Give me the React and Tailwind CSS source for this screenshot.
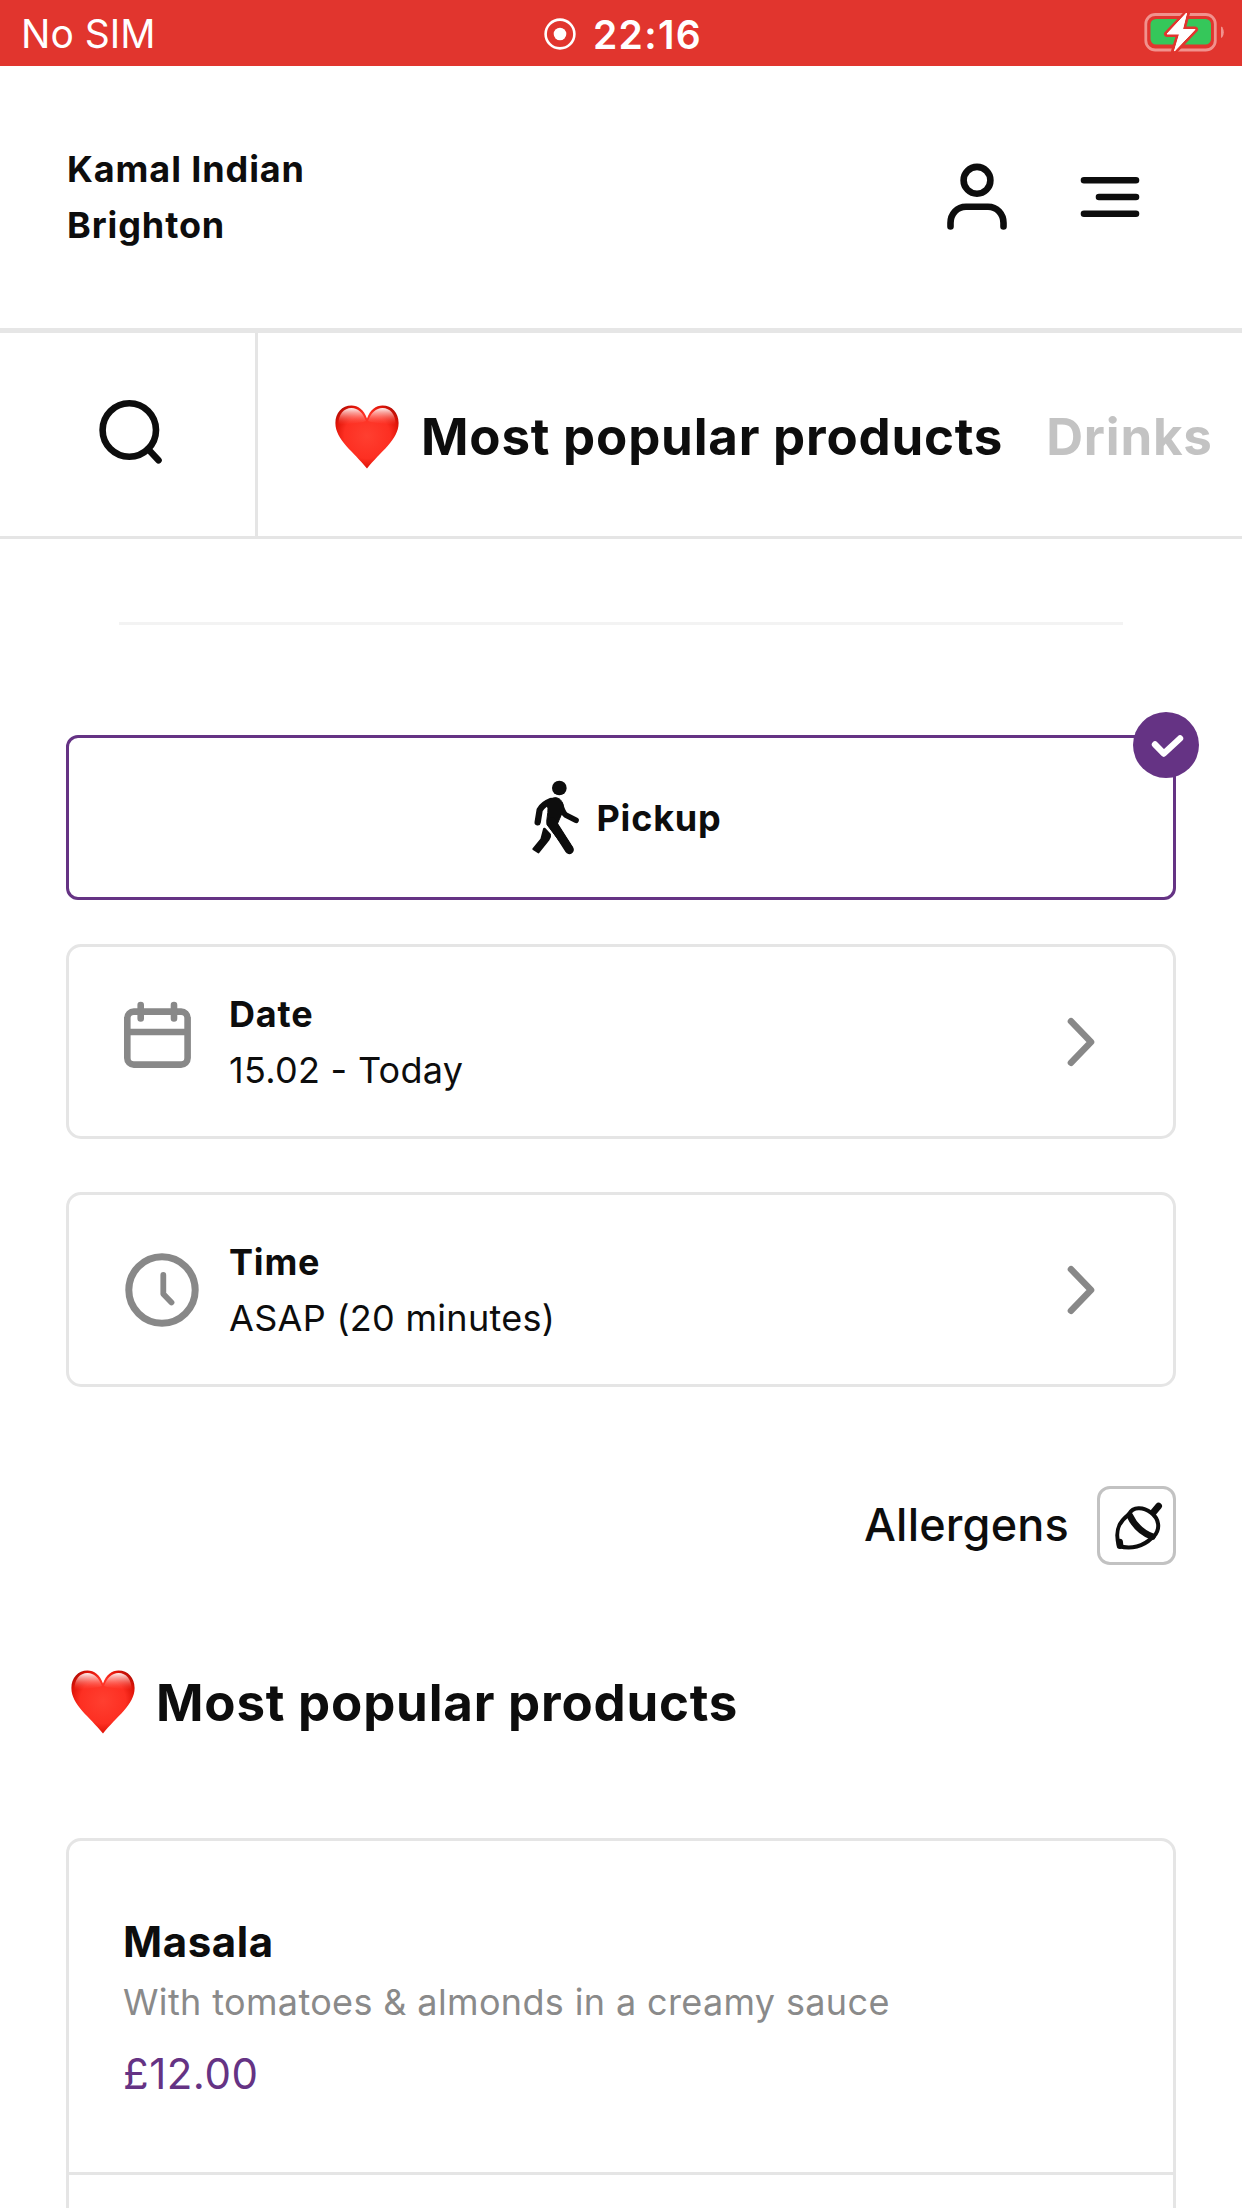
import React from 'react';

/* ICONS */
const UserIcon = () => (
  <svg width="62" height="68" viewBox="0 0 62 68" fill="none" stroke="currentColor" strokeWidth="6.6" strokeLinecap="round">
    <circle cx="31" cy="17.3" r="13.4" />
    <path d="M4.5 63.4V60C4.5 51 11 43.7 20 43.7H42C51 43.7 57.5 51 57.5 60V63.4" />
  </svg>
);

const MenuIcon = () => (
  <svg width="60" height="42" viewBox="0 0 60 42" fill="none" stroke="currentColor" strokeWidth="6.6" strokeLinecap="round">
    <path d="M4 4.3H56M19 21H56M4 37.7H56" />
  </svg>
);

const SearchIcon = () => (
  <svg width="66" height="66" viewBox="0 0 66 66" fill="none" stroke="currentColor" strokeWidth="6.6" strokeLinecap="round">
    <circle cx="31.3" cy="31" r="26.7" />
    <path d="M50 50L60.5 61.3" />
  </svg>
);

const HeartIcon = ({ id }) => (
  <svg width="64" height="64" viewBox="0 0 64 64" className="shrink-0">
    <defs>
      <radialGradient id={`${id}-body`} cx="0.5" cy="0.48" r="0.6">
        <stop offset="0" stopColor="#ff3f30" />
        <stop offset="0.6" stopColor="#fd2f22" />
        <stop offset="0.85" stopColor="#e01408" />
        <stop offset="1" stopColor="#b00c04" />
      </radialGradient>
      <linearGradient id={`${id}-gloss`} x1="0" y1="0" x2="0" y2="1">
        <stop offset="0" stopColor="#fff" stopOpacity="0.95" />
        <stop offset="0.4" stopColor="#ffc0ba" stopOpacity="0.6" />
        <stop offset="1" stopColor="#ff5045" stopOpacity="0" />
      </linearGradient>
    </defs>
    <path
      d="M32 13.5C29 5 23 0.6 16.5 0.6C7 0.6 0.4 8 0.4 18C0.4 35 19 47 32 63.6C45 47 63.6 35 63.6 18C63.6 8 57 0.6 47.5 0.6C41 0.6 35 5 32 13.5Z"
      fill={`url(#${id}-body)`}
    />
    <path d="M3.5 20C3 9.5 9 3 16.5 3C23 3 28 8 31 16C24 19 10 18 3.5 20Z" fill={`url(#${id}-gloss)`} />
    <path d="M60.5 20C61 9.5 55 3 47.5 3C41 3 36 8 33 16C40 19 54 18 60.5 20Z" fill={`url(#${id}-gloss)`} />
  </svg>
);

const WalkIcon = () => (
  <svg width="49" height="75" viewBox="36 60 147 225" fill="currentColor" stroke="currentColor" strokeLinecap="round" strokeLinejoin="round">
    <circle cx="121" cy="84" r="22" stroke="none" />
    <path d="M96 123Q72 132 62 150L56 187" fill="none" strokeWidth="19" />
    <path d="M125 134Q130 156 140 165L171 181" fill="none" strokeWidth="17" />
    <path d="M84 132C92 114 106 111 115 114C128 118 131 128 134 148L115 192L160 262L145 275L84 194C81 182 88 160 87 146Z" strokeWidth="3" />
    <path d="M98 186L151 269" fill="none" strokeWidth="27" />
    <path d="M76 207L92 224Q94 231 88 238L58 276L44 267L68 238Z" strokeWidth="8" />
  </svg>
);

const CheckIcon = () => (
  <svg width="33" height="24" viewBox="0 0 33 24" fill="none" stroke="currentColor" strokeWidth="6.4" strokeLinecap="round" strokeLinejoin="round">
    <path d="M4 10.5L12.8 19.5L29 4.5" />
  </svg>
);

const CalendarIcon = () => (
  <svg width="67" height="67" viewBox="0 0 67 67" fill="none" stroke="currentColor" strokeWidth="6.6" strokeLinecap="round">
    <rect x="3.3" y="10.6" width="60.3" height="53" rx="6.5" />
    <path d="M4 31H63" strokeLinecap="butt" />
    <path d="M16.7 4V17.5M50 4V17.5" />
  </svg>
);

const ClockIcon = () => (
  <svg width="74" height="74" viewBox="0 0 74 74" fill="none" stroke="currentColor" strokeLinecap="round" strokeLinejoin="round">
    <circle cx="37" cy="37" r="33.2" strokeWidth="7" />
    <path d="M38.3 22V41L46.5 49.5" strokeWidth="5.8" />
  </svg>
);

const ChevronIcon = () => (
  <svg width="28" height="50" viewBox="0 0 28 50" fill="none" stroke="currentColor" strokeWidth="6.6" strokeLinecap="round" strokeLinejoin="round">
    <path d="M4 4.3L24 25L4 45.7" />
  </svg>
);

const AcornIcon = () => (
  <svg width="52" height="52" viewBox="0 0 156 156" fill="none" stroke="currentColor" strokeWidth="12" strokeLinecap="round" strokeLinejoin="round">
    <path d="M56 46C70 76 92 98 124 110" strokeWidth="20" />
    <path d="M54 42C66 20 96 20 120 38C144 56 150 86 128 110" />
    <path d="M128 36L143 18" strokeWidth="20" />
    <path d="M50 46C24 66 10 92 24 138C60 150 98 138 122 114" />
    <path d="M26 126L27 137" strokeWidth="20" />
  </svg>
);

const RecordIcon = () => (
  <svg width="32" height="32" viewBox="0 0 32 32">
    <circle cx="16" cy="16" r="14.4" fill="none" stroke="#fff" strokeWidth="2.6" />
    <circle cx="16" cy="16" r="6.3" fill="#fff" />
  </svg>
);

const BatteryIcon = () => (
  <svg width="80" height="42" viewBox="0 0 80 42">
    <rect x="1.8" y="3.5" width="69.5" height="35.5" rx="9.5" fill="none" stroke="#f1928d" strokeWidth="2.8" />
    <rect x="6.5" y="8" width="60.5" height="25.5" rx="5.5" fill="#35c75a" />
    <path d="M77 15.5C80.7 17 80.7 25.5 77 27Z" fill="#f1928d" />
    <path d="M43 2L23 23H35.5L30 40.5L51 18.5H38.5Z" fill="#fff" stroke="#e1352e" strokeWidth="6" strokeLinejoin="round" paintOrder="stroke" />
    <path d="M42.5 2L23 23H35.5L30.5 40L51 18.5H38.5Z" fill="#fff" stroke="#fff" strokeWidth="1" strokeLinejoin="round" />
  </svg>
);

/* LAYOUT */
const StatusBar = () => (
  <div className="h-[66px] grid grid-cols-3 items-center bg-[#e1352e] text-white text-[39px] leading-none">
    <span className="pl-[21px] pt-px">No SIM</span>
    <div className="flex items-center justify-center gap-[17px] pl-1 pt-0.5">
      <RecordIcon />
      <span className="font-semibold tracking-[1.3px]">22:16</span>
    </div>
    <div className="flex justify-end pr-[18px] pb-0.5">
      <BatteryIcon />
    </div>
  </div>
);

const Header = () => (
  <header className="h-[267px] flex items-center justify-between pl-[67px] pr-[102px] border-b-[5px] border-[#e6e6e6]">
    <div className="text-[36px] leading-[56px] font-bold tracking-[0.9px]">
      <div>Kamal Indian</div>
      <div>Brighton</div>
    </div>
    <div className="flex items-center gap-[72px]">
      <UserIcon />
      <MenuIcon />
    </div>
  </header>
);

const CategoryNav = () => (
  <nav className="h-[206px] flex border-b-[3px] border-[#e5e5e5] overflow-hidden">
    <button className="w-[258px] shrink-0 flex items-center pl-[98px] pb-[6px] border-r-[3px] border-[#e5e5e5]">
      <SearchIcon />
    </button>
    <div className="flex items-center pl-[77px] pt-[5px] text-[51px] font-bold tracking-[0.8px] whitespace-nowrap">
      <HeartIcon id="nav-heart" />
      <span className="ml-[22px]">Most popular products</span>
      <span className="ml-[43px] text-[#c3c3c3]">Drinks</span>
    </div>
  </nav>
);

const OptionCard = ({ icon: Icon, iconClass, label, value }) => (
  <button className="w-full h-[195px] flex items-center pl-[55px] pr-[78px] border-[3px] border-[#e5e5e5] rounded-[15px] text-left">
    <span className={`w-[105px] text-[#888] ${iconClass}`}>
      <Icon />
    </span>
    <span className="flex-1 text-[36px] leading-[56px]">
      <span className="block font-bold tracking-[0.8px]">{label}</span>
      <span className="block tracking-[0.3px]">{value}</span>
    </span>
    <span className="text-[#888]">
      <ChevronIcon />
    </span>
  </button>
);

export default function App() {
  return (
    <div className="w-full h-[2208px] overflow-hidden bg-white text-[#0d0d0d] font-['Inter',sans-serif]">
      <StatusBar />
      <Header />
      <CategoryNav />

      <hr className="mt-[83px] mx-[119px] border-0 h-[3px] bg-[#f3f3f3]" />

      <main className="px-[66px]">
        <div className="relative mt-[110px] h-[165px] flex items-center justify-center gap-4 pl-[11px] border-[3px] border-[#653384] rounded-[12px]">
          <WalkIcon />
          <span className="text-[36px] font-bold tracking-[0.8px]">Pickup</span>
          <span className="absolute -top-[26px] -right-[26px] w-[66px] h-[66px] rounded-full bg-[#653384] text-white flex items-center justify-center pt-0.5 pl-0.5">
            <CheckIcon />
          </span>
        </div>

        <div className="mt-11 flex flex-col gap-[53px]">
          <OptionCard icon={CalendarIcon} iconClass="-mt-[15px]" label="Date" value="15.02 - Today" />
          <OptionCard icon={ClockIcon} iconClass="pl-px" label="Time" value="ASAP (20 minutes)" />
        </div>

        <div className="mt-[99px] flex items-center justify-end gap-[28px]">
          <span className="text-[45px] leading-none font-medium tracking-[0.2px] pb-[3px]">Allergens</span>
          <button className="w-[79px] h-[79px] flex items-center justify-center border-[3px] border-[#c2c2c2] rounded-[13px]">
            <AcornIcon />
          </button>
        </div>

        <h2 className="mt-[105px] h-16 flex items-center gap-[21px] pl-[5px] text-[51px] leading-none font-bold tracking-[0.8px]">
          <HeartIcon id="section-heart" />
          Most popular products
        </h2>

        <section className="mt-[104px] h-[420px] border-[3px] border-[#e5e5e5] rounded-[15px]">
          <div className="h-[334px] px-[54px] pt-[73px] border-b-[3px] border-[#e5e5e5]">
            <h3 className="text-[42px] leading-[56px] font-bold tracking-[0.6px]">Masala</h3>
            <p className="mt-[4px] text-[36px] leading-[56px] tracking-[0.36px] text-[#8a8a8a]">With tomatoes &amp; almonds in a creamy sauce</p>
            <p className="mt-[16px] text-[42px] leading-[56px] tracking-[0.5px] text-[#653384]">£12.00</p>
          </div>
        </section>
      </main>
    </div>
  );
}
